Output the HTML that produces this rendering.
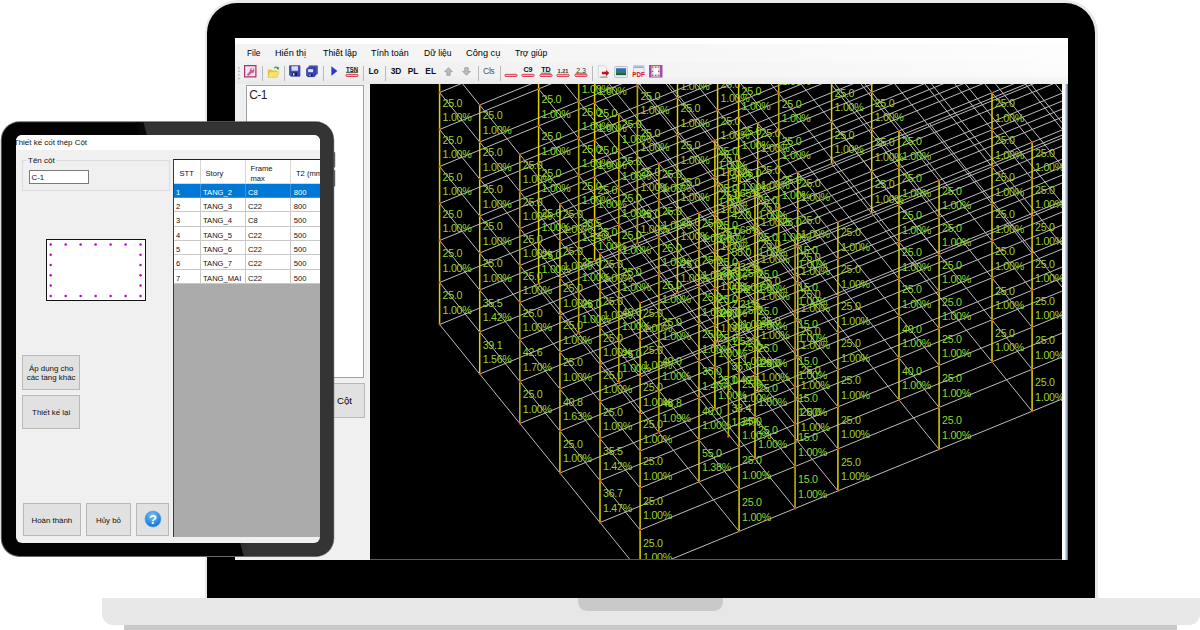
<!DOCTYPE html>
<html lang="vi">
<head>
<meta charset="utf-8">
<title>Thiết kế cốt thép Cột</title>
<style>
*{box-sizing:border-box;margin:0;padding:0}
html,body{width:1200px;height:630px;overflow:hidden;background:#fff}
body{position:relative;font-family:"Liberation Sans",Arial,sans-serif;color:#000}
.abs{position:absolute}

/* ---------- laptop ---------- */
#lid{position:absolute;left:204.5px;top:0;width:893px;height:600px;background:#e9e9e9;border-radius:33px 33px 0 0}
#bezel{position:absolute;left:207px;top:3px;width:887.5px;height:597px;background:#000;border-radius:30px 30px 0 0}
#shadow{position:absolute;left:124px;top:615px;width:1053px;height:30px;background:#c9c9c9;border-radius:0 0 12px 12px}
#base{position:absolute;left:102px;top:598px;width:1098px;height:27px;background:#e7e7e7;border-radius:0 0 11px 11px}
#notch{position:absolute;left:578px;top:598px;width:145px;height:13px;background:#c9c9c9;border-radius:0 0 9px 9px}

#screen{position:absolute;left:234.5px;top:38px;width:833px;height:521.5px;background:#f0f0f0;overflow:hidden}
#topstrip{position:absolute;left:0;top:0;width:100%;height:6px;background:#fff}
#menubar{position:absolute;left:0;top:6px;width:100%;height:18px;background:linear-gradient(90deg,#f3f3f3 0,#f6f6f6 45%,#fdfdfd 100%);font-size:9.6px;color:#000}
#menubar span{position:absolute;top:3.2px;white-space:nowrap;transform-origin:0 50%}
#toolbar{position:absolute;left:0;top:24px;width:100%;height:22px;background:linear-gradient(180deg,rgba(255,255,255,0) 0,rgba(255,255,255,0) 60%,rgba(225,225,225,.55) 100%),linear-gradient(90deg,#f0f0f0 0,#f3f3f3 45%,#fcfcfc 100%)}
#toolbar .sep{position:absolute;top:4px;width:1px;height:15px;background:#b9b9b9}
#toolbar .t{position:absolute;top:4.2px;font-size:8.4px;font-weight:bold;white-space:nowrap;color:#111}
#toolbar svg{position:absolute;overflow:visible}
#listbox{position:absolute;left:11.3px;top:46.5px;width:118.5px;height:293px;background:#fff;border:1px solid #9aa0a8}
#listbox span{position:absolute;left:2.4px;top:2.4px;font-size:12px;color:#222;letter-spacing:-0.5px}
#colbtn{position:absolute;left:60px;top:344.7px;width:70px;height:35px;background:#e1e1e1;border:1px solid #b8b8b8;font-size:9.6px;text-align:right;padding:11.3px 11.5px 0 0;white-space:nowrap}
#viewport{position:absolute;left:135px;top:46px;width:692.5px;height:476px;background:#000;overflow:hidden}
#vline{position:absolute;left:135px;top:520.7px;width:692.5px;height:0.8px;background:#5a5a5a}
#rstrip{position:absolute;left:827.5px;top:46px;width:5.5px;height:476px;background:linear-gradient(90deg,#fff 0,#fdfdfd 40%,#a9b9d2 72%,#596273 100%)}
svg.wire{position:absolute;left:0;top:0;display:block}

/* ---------- tablet ---------- */
#tablet{position:absolute;left:0;top:120px;width:337px;height:438px}
#tscreen{position:absolute;left:16px;top:135px;width:304px;height:407.5px;background:#f0f0f0;border-radius:6px;overflow:hidden;font-size:7.6px;color:#111}
#ttitle{position:absolute;left:0;top:0;width:100%;height:15px;background:#fff;font-size:7.95px;white-space:nowrap}
#ttitle span{position:absolute;left:-2.2px;top:2.5px}
#grp{position:absolute;left:6px;top:24.5px;width:147.5px;height:31px;border:1px solid #dcdcdc}
#grplbl{position:absolute;left:11px;top:20.5px;background:#f0f0f0;padding:0 1px;font-size:8px}
#tbox{position:absolute;left:12.5px;top:34.5px;width:60px;height:14px;background:#fff;border:1px solid #7a7a7a;font-size:7.8px;padding:2.2px 0 0 2px}
#sect{position:absolute;left:30px;top:103.5px;width:100px;height:62px;background:#fff;border:1px solid #111}
.btn{position:absolute;background:#e1e1e1;border:1px solid #b8b8b8;text-align:center;white-space:nowrap;font-size:7.9px;line-height:9.4px}
#grid{position:absolute;left:156.5px;top:24px;width:161px;height:377.5px;background:#ababab;border-left:1.5px solid #3a3a3a;border-top:1.5px solid #222}
#grid .hd{position:absolute;left:0;top:0;height:23.8px;background:#fff;border-right:1px solid #d6d6d6;border-bottom:1px solid #d6d6d6}
#grid .c{position:absolute;height:14.35px;background:#fff;border-right:1px solid #c8c8c8;border-bottom:1px solid #c8c8c8;padding:4.2px 0 0 2.5px;white-space:nowrap;overflow:hidden}
#grid .sel{background:#0078d7;color:#fff;border-color:#3a93de}
#grid .hd span{position:absolute;white-space:nowrap;line-height:9.6px}
</style>
</head>
<body>

<!-- laptop body -->
<div id="lid"></div>
<div id="bezel"></div>
<div id="shadow"></div>
<div id="base"></div>
<div id="notch"></div>

<div id="screen">
  <div id="topstrip"></div>
  <div id="menubar">
    <span style="left:12.8px;transform:scaleX(0.87)">File</span>
    <span style="left:40.8px;transform:scaleX(0.95)">Hiển thị</span>
    <span style="left:88px;transform:scaleX(0.92)">Thiết lập</span>
    <span style="left:136.8px;transform:scaleX(0.93)">Tính toán</span>
    <span style="left:189.3px;transform:scaleX(0.89)">Dữ liệu</span>
    <span style="left:231.8px;transform:scaleX(0.96)">Công cụ</span>
    <span style="left:280.7px;transform:scaleX(0.9)">Trợ giúp</span>
  </div>
  <div id="toolbar">
    <svg width="4" height="16" style="left:2px;top:3px" viewBox="0 0 4 16"><path d="M1 2h1.6v1.4H1zM1 5.6h1.6V7H1zM1 9.200000000000001h1.6v1.4H1zM1 12.8h1.6v1.4H1z" fill="#b4b4b4"/></svg>
    <!-- key icon -->
    <svg width="12.5" height="12.5" style="left:9.5px;top:3px" viewBox="0 0 16 16"><rect x="0.8" y="0.8" width="14.4" height="14.4" fill="#f6e3ee" stroke="#a3396f" stroke-width="1.6"/><path d="M3.5 12.5l4-4.6a3 3 0 1 1 2.4 2.2l-4.2 4z" fill="#c9609a"/><circle cx="10.6" cy="5.4" r="1.1" fill="#f6e3ee"/></svg>
    <div class="sep" style="left:27px"></div>
    <!-- open folder -->
    <svg width="13" height="13" style="left:32px;top:3px" viewBox="0 0 16 16"><path d="M1 5.5h5l1 1.3h5.5V15H1z" fill="#e4c43c"/><path d="M3.2 8.2h11.6L12.6 15H1z" fill="#f7e468" stroke="#d5b230" stroke-width="0.5"/><path d="M8.3 3.6c1.6-2.4 4.4-2.4 5.4-.6l1.2-.6-.5 3.4-3.1-1.300000000000001 1.200000000000001-.6c-.7-1-2-1-3 .4z" fill="#2f9a3c"/></svg>
    <div class="sep" style="left:49px"></div>
    <!-- save -->
    <svg width="11.5" height="12" style="left:54.5px;top:3px" viewBox="0 0 16 16"><path d="M0.8 0.8h14.4v14.4H2.6L0.8 13.4z" fill="#3b4cc0" stroke="#26318a" stroke-width="1"/><rect x="3.4" y="1.4" width="9.2" height="6.2" fill="#d9def6"/><rect x="4.6" y="10" width="6.8" height="5" fill="#1b1f52"/><rect x="5.6" y="11" width="2" height="3.4" fill="#d9def6"/></svg>
    <!-- save all -->
    <svg width="12" height="12.5" style="left:71px;top:2.5px" viewBox="0 0 16 16"><path d="M4.5 0.8h10.7v10.7H4.5z" fill="#5262cc" stroke="#2c3796" stroke-width="0.9"/><path d="M2.6 2.6h10.7v10.7H2.6z" fill="#4656c6" stroke="#2c3796" stroke-width="0.9"/><path d="M0.8 4.5h10.7v10.7H2.200000000000001L0.8 13.8z" fill="#3b4cc0" stroke="#26318a" stroke-width="0.9"/><rect x="2.8" y="5.2" width="6.6" height="4" fill="#d9def6"/><rect x="3.8" y="11.3" width="5" height="3.6" fill="#1b1f52"/><rect x="4.6" y="12" width="1.5" height="2.4" fill="#d9def6"/></svg>
    <div class="sep" style="left:88.5px"></div>
    <!-- play -->
    <svg width="7" height="10" style="left:96.3px;top:4px" viewBox="0 0 7 10"><path d="M0.4 0.2L6.4 5 0.4 9.8z" fill="#2b35d8"/></svg>
    <!-- TSN -->
    <svg width="14" height="13" style="left:110px;top:3px" viewBox="0 0 14 13"><text x="7" y="6.6" text-anchor="middle" font-family="Liberation Sans,Arial,sans-serif" font-weight="bold" font-size="6.6" fill="#111" textLength="12" lengthAdjust="spacingAndGlyphs">TSN</text><rect x="1" y="6.9" width="12" height="0.7" fill="#111"/><rect x="0.8" y="9.3" width="12.4" height="2.2" rx="1.1" fill="#b9cfe4" stroke="#e0202c" stroke-width="0.8"/></svg>
    <div class="sep" style="left:128.5px"></div>
    <div class="t" style="left:134px">Lo</div>
    <div class="sep" style="left:150.5px"></div>
    <div class="t" style="left:156.2px">3D</div>
    <div class="t" style="left:173.2px">PL</div>
    <div class="t" style="left:190.8px">EL</div>
    <!-- arrows -->
    <svg width="9" height="9" style="left:209.5px;top:4.8px" viewBox="0 0 9 9"><path d="M4.5 0.7L8.3 4.6H6.2V8.3H2.8V4.6H0.7z" fill="#bdbdbd" stroke="#8f8f8f" stroke-width="0.7"/></svg>
    <svg width="9" height="9" style="left:227.5px;top:4.8px" viewBox="0 0 9 9"><path d="M4.5 8.3L8.3 4.4H6.2V0.7H2.8V4.4H0.7z" fill="#bdbdbd" stroke="#8f8f8f" stroke-width="0.7"/></svg>
    <div class="sep" style="left:243px"></div>
    <div class="t" style="left:248.6px;font-weight:normal;color:#555;font-size:8.8px;letter-spacing:-0.55px">Cls</div>
    <div class="sep" style="left:265px"></div>
    <!-- underline icons -->
    <svg width="14" height="13" style="left:269.3px;top:3px" viewBox="0 0 14 13"><rect x="0.8" y="9.3" width="12.4" height="2.2" rx="1.1" fill="#b9cfe4" stroke="#e0202c" stroke-width="0.8"/></svg>
    <svg width="14" height="13" style="left:286.3px;top:3px" viewBox="0 0 14 13"><text x="7" y="7.4" text-anchor="middle" font-family="Liberation Sans,Arial,sans-serif" font-weight="bold" font-size="7.2" fill="#111">C9</text><rect x="0.8" y="9.3" width="12.4" height="2.2" rx="1.1" fill="#b9cfe4" stroke="#e0202c" stroke-width="0.8"/></svg>
    <svg width="14" height="13" style="left:304.2px;top:3px" viewBox="0 0 14 13"><text x="7" y="7.4" text-anchor="middle" font-family="Liberation Sans,Arial,sans-serif" font-weight="bold" font-size="7.2" fill="#111">TD</text><rect x="2.2" y="7.8" width="9.6" height="0.6" fill="#111"/><rect x="0.8" y="9.3" width="12.4" height="2.2" rx="1.1" fill="#b9cfe4" stroke="#e0202c" stroke-width="0.8"/></svg>
    <svg width="14" height="13" style="left:321.8px;top:3px" viewBox="0 0 14 13"><text x="7" y="7.6" text-anchor="middle" font-family="Liberation Sans,Arial,sans-serif" font-weight="bold" font-size="5.6" fill="#333">1.21</text><rect x="0.8" y="9.3" width="12.4" height="2.2" rx="1.1" fill="#b9cfe4" stroke="#e0202c" stroke-width="0.8"/></svg>
    <svg width="14" height="13" style="left:339.5px;top:3px" viewBox="0 0 14 13"><text x="7" y="7.5" text-anchor="middle" font-family="Liberation Sans,Arial,sans-serif" font-size="7" fill="#333">2.3</text><rect x="1.5" y="8" width="11" height="0.5" fill="#444"/><rect x="0.8" y="9.3" width="12.4" height="2.2" rx="1.1" fill="#b9cfe4" stroke="#e0202c" stroke-width="0.8"/></svg>
    <div class="sep" style="left:357.6px"></div>
    <!-- doc with red arrow -->
    <svg width="13" height="13" style="left:362.5px;top:3px" viewBox="0 0 16 16"><path d="M1.5 0.8h7.5l3 3V15.200000000000001H1.5z" fill="#f4f4f4" stroke="#c9c9c9" stroke-width="0.8"/><path d="M4 14.2h9v1.3H4z" fill="#8a8a8a"/><path d="M6 8.3h5V6l4.2 3.9L11 13.8v-2.300000000000001H6z" fill="#c4101c"/></svg>
    <!-- picture -->
    <svg width="14" height="12" style="left:379px;top:3.5px" viewBox="0 0 16 14"><rect x="0.6" y="0.6" width="14.8" height="12.8" rx="1" fill="#eef1f4" stroke="#a9b2bb" stroke-width="0.9"/><rect x="2.2" y="2.6" width="11.6" height="8" fill="#2f6fb4"/><path d="M2.2 10.6V7.2l3.5-2.2 4 3 4.100000000000001-1.2v3.8z" fill="#2e7f52"/><path d="M2.2 10.6V8.6l11.6 0v2z" fill="#1d5b3a"/></svg>
    <!-- pdf -->
    <svg width="13" height="13" style="left:397.2px;top:3px" viewBox="0 0 13 13"><rect x="1.5" y="0.8" width="10.5" height="8" fill="#e9eef6" stroke="#a8b7cc" stroke-width="0.7"/><rect x="2" y="1.6" width="9.4" height="1.1" fill="#5f8fd0"/><text x="6.5" y="12.4" text-anchor="middle" font-family="Liberation Sans,Arial,sans-serif" font-weight="bold" font-size="7.6" fill="#e01818" textLength="12.4" lengthAdjust="spacingAndGlyphs">PDF</text></svg>
    <!-- purple section icon -->
    <svg width="13.5" height="12.5" style="left:414.3px;top:2.6px" viewBox="0 0 14 13"><rect x="0" y="0" width="14" height="13" fill="#a24bb0"/><rect x="2.6" y="0.9" width="8.8" height="11.2" fill="#dcdcdc"/><path d="M3.200000000000001 1.6h1.200000000000001v1.200000000000001H3.200000000000001zM6.4 1.6h1.2v1.200000000000001H6.4zM9.6 1.6h1.2v1.200000000000001H9.6zM3.200000000000001 10.200000000000001h1.200000000000001v1.2H3.200000000000001zM6.4 10.200000000000001h1.2v1.2H6.4zM9.6 10.200000000000001h1.2v1.2H9.6zM3.200000000000001 6h1.200000000000001v1.2H3.200000000000001zM9.6 6h1.2v1.2H9.6z" fill="#e22"/><rect x="4.8" y="3.4" width="4.4" height="6.2" fill="#fff"/></svg>

  </div>
  <div id="listbox"><span>C-1</span></div>
  <div id="colbtn">Chọn Cột</div>
  <div id="viewport">
<svg class="wire" width="692.5" height="475.0" viewBox="0 0 692.5 475.0">
<path d="M296.9 477.0L694.5 314.0M230.0 438.5L694.5 248.1M189.9 389.0L694.5 182.1M149.8 339.5L694.5 116.2M109.7 290.0L694.5 50.2M69.6 240.5L661.1 -2.0M261.2 477.0L69.6 240.5M369.1 447.4L168.6 199.9M425.1 424.4L224.6 176.9M467.9 406.9L267.4 159.4M569.1 365.4L368.6 117.9M662.1 327.3L461.6 79.8M694.5 206.1L559.6 39.6M694.5 41.7L659.6 -1.4M270.1 446.0L694.5 272.0M230.0 396.5L694.5 206.1M189.9 347.0L694.5 140.1M149.8 297.5L694.5 74.2M109.7 248.0L694.5 8.2M69.6 198.5L558.6 -2.0M270.1 446.0L69.6 198.5M369.1 405.4L168.6 157.9M425.1 382.4L224.6 134.9M467.9 364.9L267.4 117.4M569.1 323.4L368.6 75.9M662.1 285.3L461.6 37.8M694.5 164.1L559.9 -2.0M694.5 -0.3L693.1 -2.0M270.1 404.0L694.5 230.0M230.0 354.5L694.5 164.1M189.9 305.0L694.5 98.1M149.8 255.5L694.5 32.2M109.7 206.0L617.0 -2.0M69.6 156.5L456.2 -2.0M270.1 404.0L69.6 156.5M369.1 363.4L168.6 115.9M425.1 340.4L224.6 92.9M467.9 322.9L267.4 75.4M569.1 281.4L368.6 33.9M662.1 243.3L463.4 -2.0M694.5 122.1L593.9 -2.0M270.1 367.0L694.5 193.0M230.0 317.5L694.5 127.1M189.9 268.0L694.5 61.1M149.8 218.5L687.6 -2.0M109.7 169.0L526.8 -2.0M69.6 119.5L365.9 -2.0M270.1 367.0L69.6 119.5M369.1 326.4L168.6 78.9M425.1 303.4L224.6 55.9M467.9 285.9L267.4 38.4M569.1 244.4L369.5 -2.0M662.1 206.3L493.4 -2.0M694.5 85.1L623.9 -2.0M270.1 330.0L694.5 156.0M230.0 280.5L694.5 90.1M189.9 231.0L694.5 24.1M149.8 181.5L597.4 -2.0M109.7 132.0L436.5 -2.0M69.6 82.5L275.7 -2.0M270.1 330.0L69.6 82.5M369.1 289.4L168.6 41.9M425.1 266.4L224.6 18.9M467.9 248.9L267.4 1.4M569.1 207.4L399.5 -2.0M662.1 169.3L523.3 -2.0M694.5 48.1L653.9 -2.0M270.1 293.0L694.5 119.0M230.0 243.5L694.5 53.1M189.9 194.0L667.9 -2.0M149.8 144.5L507.1 -2.0M109.7 95.0L346.3 -2.0M69.6 45.5L185.5 -2.0M270.1 293.0L69.6 45.5M369.1 252.4L168.6 4.9M425.1 229.4L237.6 -2.0M467.9 211.9L294.6 -2.0M569.1 170.4L429.4 -2.0M662.1 132.3L553.3 -2.0M694.5 11.1L683.9 -2.0M270.1 256.0L694.5 82.0M230.0 206.5L694.5 16.1M189.9 157.0L577.7 -2.0M149.8 107.5L416.9 -2.0M109.7 58.0L256.0 -2.0M69.6 8.5L95.2 -2.0M270.1 256.0L69.6 8.5M369.1 215.4L193.0 -2.0M425.1 192.4L267.6 -2.0M467.9 174.9L324.6 -2.0M569.1 133.4L459.4 -2.0M662.1 95.3L583.3 -2.0M270.1 219.0L694.5 45.0M230.0 169.5L648.3 -2.0M189.9 120.0L487.5 -2.0M149.8 70.5L326.6 -2.0M109.7 21.0L165.8 -2.0M270.1 219.0L91.1 -2.0M369.1 178.4L222.9 -2.0M425.1 155.4L297.5 -2.0M467.9 137.9L354.6 -2.0M569.1 96.4L489.4 -2.0M662.1 58.3L613.3 -2.0" stroke="#bcbcbc" stroke-width="1" fill="none"/>
<path d="" stroke="#a8a8a8" stroke-width="0.9" fill="none"/>
<path d="M425.1 424.4L425.1 155.4M288.9 348.4L288.9 79.4M149.8 339.5L149.8 70.5M248.8 298.9L248.8 29.9M208.7 249.4L208.7 -2.0M408.7 167.4L408.7 -2.0M267.4 159.4L267.4 -2.0M358.4 352.9L358.4 83.9" stroke="#b8ae00" stroke-width="1.6" fill="none"/>
<path d="M270.1 477.0L270.1 219.0M369.1 447.4L369.1 178.4M467.9 406.9L467.9 137.9M569.1 365.4L569.1 96.4M662.1 327.3L662.1 58.3M230.0 438.5L230.0 169.5M329.0 397.9L329.0 128.9M385.0 374.9L385.0 105.9M427.8 357.4L427.8 88.4M529.0 315.9L529.0 46.9M622.0 277.8L622.0 8.8M189.9 389.0L189.9 120.0M344.9 325.4L344.9 56.4M387.7 307.9L387.7 38.9M347.6 258.4L347.6 -2.0M109.7 290.0L109.7 21.0M307.5 208.9L307.5 -2.0M501.7 129.3L501.7 -2.0M69.6 240.5L69.6 -2.0M168.6 199.9L168.6 -2.0M224.6 176.9L224.6 -2.0M368.6 117.9L368.6 -2.0M461.6 79.8L461.6 -2.0" stroke="#e0d400" stroke-width="1.5" fill="none"/>
<path d="M269.2 445.1h1.8v1.8h-1.8zM269.2 403.1h1.8v1.8h-1.8zM269.2 366.1h1.8v1.8h-1.8zM269.2 329.1h1.8v1.8h-1.8zM269.2 292.1h1.8v1.8h-1.8zM269.2 255.1h1.8v1.8h-1.8zM269.2 218.1h1.8v1.8h-1.8zM368.2 446.5h1.8v1.8h-1.8zM368.2 404.5h1.8v1.8h-1.8zM368.2 362.5h1.8v1.8h-1.8zM368.2 325.5h1.8v1.8h-1.8zM368.2 288.5h1.8v1.8h-1.8zM368.2 251.5h1.8v1.8h-1.8zM368.2 214.5h1.8v1.8h-1.8zM368.2 177.5h1.8v1.8h-1.8zM424.2 423.6h1.8v1.8h-1.8zM424.2 381.6h1.8v1.8h-1.8zM424.2 339.6h1.8v1.8h-1.8zM424.2 302.6h1.8v1.8h-1.8zM424.2 265.6h1.8v1.8h-1.8zM424.2 228.5h1.8v1.8h-1.8zM424.2 191.5h1.8v1.8h-1.8zM424.2 154.5h1.8v1.8h-1.8zM467.0 406.0h1.8v1.8h-1.8zM467.0 364.0h1.8v1.8h-1.8zM467.0 322.0h1.8v1.8h-1.8zM467.0 285.0h1.8v1.8h-1.8zM467.0 248.0h1.8v1.8h-1.8zM467.0 211.0h1.8v1.8h-1.8zM467.0 174.0h1.8v1.8h-1.8zM467.0 137.0h1.8v1.8h-1.8zM568.2 364.5h1.8v1.8h-1.8zM568.2 322.5h1.8v1.8h-1.8zM568.2 280.5h1.8v1.8h-1.8zM568.2 243.5h1.8v1.8h-1.8zM568.2 206.5h1.8v1.8h-1.8zM568.2 169.5h1.8v1.8h-1.8zM568.2 132.5h1.8v1.8h-1.8zM568.2 95.5h1.8v1.8h-1.8zM661.2 326.4h1.8v1.8h-1.8zM661.2 284.4h1.8v1.8h-1.8zM661.2 242.4h1.8v1.8h-1.8zM661.2 205.4h1.8v1.8h-1.8zM661.2 168.4h1.8v1.8h-1.8zM661.2 131.4h1.8v1.8h-1.8zM661.2 94.4h1.8v1.8h-1.8zM661.2 57.4h1.8v1.8h-1.8zM229.1 437.6h1.8v1.8h-1.8zM229.1 395.6h1.8v1.8h-1.8zM229.1 353.6h1.8v1.8h-1.8zM229.1 316.6h1.8v1.8h-1.8zM229.1 279.6h1.8v1.8h-1.8zM229.1 242.6h1.8v1.8h-1.8zM229.1 205.6h1.8v1.8h-1.8zM229.1 168.6h1.8v1.8h-1.8zM328.1 397.0h1.8v1.8h-1.8zM328.1 355.0h1.8v1.8h-1.8zM328.1 313.0h1.8v1.8h-1.8zM328.1 276.0h1.8v1.8h-1.8zM328.1 239.0h1.8v1.8h-1.8zM328.1 202.0h1.8v1.8h-1.8zM328.1 165.0h1.8v1.8h-1.8zM328.1 128.0h1.8v1.8h-1.8zM384.1 374.1h1.8v1.8h-1.8zM384.1 332.1h1.8v1.8h-1.8zM384.1 290.1h1.8v1.8h-1.8zM384.1 253.0h1.8v1.8h-1.8zM384.1 216.0h1.8v1.8h-1.8zM384.1 179.0h1.8v1.8h-1.8zM384.1 142.0h1.8v1.8h-1.8zM384.1 105.0h1.8v1.8h-1.8zM426.9 356.5h1.8v1.8h-1.8zM426.9 314.5h1.8v1.8h-1.8zM426.9 272.5h1.8v1.8h-1.8zM426.9 235.5h1.8v1.8h-1.8zM426.9 198.5h1.8v1.8h-1.8zM426.9 161.5h1.8v1.8h-1.8zM426.9 124.5h1.8v1.8h-1.8zM426.9 87.5h1.8v1.8h-1.8zM528.1 315.0h1.8v1.8h-1.8zM528.1 273.0h1.8v1.8h-1.8zM528.1 231.0h1.8v1.8h-1.8zM528.1 194.0h1.8v1.8h-1.8zM528.1 157.0h1.8v1.8h-1.8zM528.1 120.0h1.8v1.8h-1.8zM528.1 83.0h1.8v1.8h-1.8zM528.1 46.0h1.8v1.8h-1.8zM621.1 276.9h1.8v1.8h-1.8zM621.1 234.9h1.8v1.8h-1.8zM621.1 192.9h1.8v1.8h-1.8zM621.1 155.9h1.8v1.8h-1.8zM621.1 118.9h1.8v1.8h-1.8zM621.1 81.9h1.8v1.8h-1.8zM621.1 44.9h1.8v1.8h-1.8zM621.1 7.9h1.8v1.8h-1.8zM189.0 388.1h1.8v1.8h-1.8zM189.0 346.1h1.8v1.8h-1.8zM189.0 304.1h1.8v1.8h-1.8zM189.0 267.1h1.8v1.8h-1.8zM189.0 230.1h1.8v1.8h-1.8zM189.0 193.1h1.8v1.8h-1.8zM189.0 156.1h1.8v1.8h-1.8zM189.0 119.1h1.8v1.8h-1.8zM288.0 347.5h1.8v1.8h-1.8zM288.0 305.5h1.8v1.8h-1.8zM288.0 263.5h1.8v1.8h-1.8zM288.0 226.5h1.8v1.8h-1.8zM288.0 189.5h1.8v1.8h-1.8zM288.0 152.5h1.8v1.8h-1.8zM288.0 115.5h1.8v1.8h-1.8zM288.0 78.5h1.8v1.8h-1.8zM344.0 324.6h1.8v1.8h-1.8zM344.0 282.6h1.8v1.8h-1.8zM344.0 240.5h1.8v1.8h-1.8zM344.0 203.5h1.8v1.8h-1.8zM344.0 166.5h1.8v1.8h-1.8zM344.0 129.5h1.8v1.8h-1.8zM344.0 92.5h1.8v1.8h-1.8zM344.0 55.5h1.8v1.8h-1.8zM386.8 307.0h1.8v1.8h-1.8zM386.8 265.0h1.8v1.8h-1.8zM386.8 223.0h1.8v1.8h-1.8zM386.8 186.0h1.8v1.8h-1.8zM386.8 149.0h1.8v1.8h-1.8zM386.8 112.0h1.8v1.8h-1.8zM386.8 75.0h1.8v1.8h-1.8zM386.8 38.0h1.8v1.8h-1.8zM148.9 338.6h1.8v1.8h-1.8zM148.9 296.6h1.8v1.8h-1.8zM148.9 254.6h1.8v1.8h-1.8zM148.9 217.6h1.8v1.8h-1.8zM148.9 180.6h1.8v1.8h-1.8zM148.9 143.6h1.8v1.8h-1.8zM148.9 106.6h1.8v1.8h-1.8zM148.9 69.6h1.8v1.8h-1.8zM247.9 298.0h1.8v1.8h-1.8zM247.9 256.0h1.8v1.8h-1.8zM247.9 214.0h1.8v1.8h-1.8zM247.9 177.0h1.8v1.8h-1.8zM247.9 140.0h1.8v1.8h-1.8zM247.9 103.0h1.8v1.8h-1.8zM247.9 66.0h1.8v1.8h-1.8zM247.9 29.0h1.8v1.8h-1.8zM346.7 257.5h1.8v1.8h-1.8zM346.7 215.5h1.8v1.8h-1.8zM346.7 173.5h1.8v1.8h-1.8zM346.7 136.5h1.8v1.8h-1.8zM346.7 99.5h1.8v1.8h-1.8zM346.7 62.5h1.8v1.8h-1.8zM346.7 25.5h1.8v1.8h-1.8zM108.8 289.1h1.8v1.8h-1.8zM108.8 247.1h1.8v1.8h-1.8zM108.8 205.1h1.8v1.8h-1.8zM108.8 168.1h1.8v1.8h-1.8zM108.8 131.1h1.8v1.8h-1.8zM108.8 94.1h1.8v1.8h-1.8zM108.8 57.1h1.8v1.8h-1.8zM108.8 20.1h1.8v1.8h-1.8zM207.8 248.5h1.8v1.8h-1.8zM207.8 206.5h1.8v1.8h-1.8zM207.8 164.5h1.8v1.8h-1.8zM207.8 127.5h1.8v1.8h-1.8zM207.8 90.5h1.8v1.8h-1.8zM207.8 53.5h1.8v1.8h-1.8zM207.8 16.5h1.8v1.8h-1.8zM306.6 208.0h1.8v1.8h-1.8zM306.6 166.0h1.8v1.8h-1.8zM306.6 124.0h1.8v1.8h-1.8zM306.6 87.0h1.8v1.8h-1.8zM306.6 50.0h1.8v1.8h-1.8zM306.6 13.0h1.8v1.8h-1.8zM407.8 166.5h1.8v1.8h-1.8zM407.8 124.5h1.8v1.8h-1.8zM407.8 82.5h1.8v1.8h-1.8zM407.8 45.5h1.8v1.8h-1.8zM407.8 8.5h1.8v1.8h-1.8zM500.8 128.4h1.8v1.8h-1.8zM500.8 86.4h1.8v1.8h-1.8zM500.8 44.4h1.8v1.8h-1.8zM500.8 7.4h1.8v1.8h-1.8zM68.7 239.6h1.8v1.8h-1.8zM68.7 197.6h1.8v1.8h-1.8zM68.7 155.6h1.8v1.8h-1.8zM68.7 118.6h1.8v1.8h-1.8zM68.7 81.6h1.8v1.8h-1.8zM68.7 44.6h1.8v1.8h-1.8zM68.7 7.6h1.8v1.8h-1.8zM167.7 199.0h1.8v1.8h-1.8zM167.7 157.0h1.8v1.8h-1.8zM167.7 115.0h1.8v1.8h-1.8zM167.7 78.0h1.8v1.8h-1.8zM167.7 41.0h1.8v1.8h-1.8zM167.7 4.0h1.8v1.8h-1.8zM223.7 176.0h1.8v1.8h-1.8zM223.7 134.0h1.8v1.8h-1.8zM223.7 92.0h1.8v1.8h-1.8zM223.7 55.0h1.8v1.8h-1.8zM223.7 18.0h1.8v1.8h-1.8zM266.5 158.5h1.8v1.8h-1.8zM266.5 116.5h1.8v1.8h-1.8zM266.5 74.5h1.8v1.8h-1.8zM266.5 37.5h1.8v1.8h-1.8zM266.5 0.5h1.8v1.8h-1.8zM367.7 117.0h1.8v1.8h-1.8zM367.7 75.0h1.8v1.8h-1.8zM367.7 33.0h1.8v1.8h-1.8zM460.7 78.9h1.8v1.8h-1.8zM460.7 36.9h1.8v1.8h-1.8zM357.5 352.0h1.8v1.8h-1.8zM357.5 310.0h1.8v1.8h-1.8zM357.5 268.0h1.8v1.8h-1.8zM357.5 231.0h1.8v1.8h-1.8zM357.5 194.0h1.8v1.8h-1.8zM357.5 157.0h1.8v1.8h-1.8zM357.5 120.0h1.8v1.8h-1.8zM357.5 83.0h1.8v1.8h-1.8z" fill="#f03a14"/>
<g font-family="Liberation Sans, Arial, sans-serif" font-size="10.7" letter-spacing="-0.28" fill="#96d62d">
<text x="273.1" y="462.9">25.0<tspan x="273.1" dy="14.3">1.00%</tspan></text>
<text x="273.1" y="420.9">25.0<tspan x="273.1" dy="14.3">1.00%</tspan></text>
<text x="273.1" y="381.4">25.0<tspan x="273.1" dy="14.3">1.00%</tspan></text>
<text x="273.1" y="344.4">25.0<tspan x="273.1" dy="14.3">1.00%</tspan></text>
<text x="273.1" y="307.4">25.0<tspan x="273.1" dy="14.3">1.00%</tspan></text>
<text x="273.1" y="270.4">25.0<tspan x="273.1" dy="14.3">1.00%</tspan></text>
<text x="273.1" y="233.4">25.0<tspan x="273.1" dy="14.3">1.00%</tspan></text>
<text x="372.1" y="422.3">25.0<tspan x="372.1" dy="14.3">1.00%</tspan></text>
<text x="372.1" y="380.3">25.0<tspan x="372.1" dy="14.3">1.00%</tspan></text>
<text x="372.1" y="340.8">25.0<tspan x="372.1" dy="14.3">1.00%</tspan></text>
<text x="372.1" y="303.8">25.0<tspan x="372.1" dy="14.3">1.00%</tspan></text>
<text x="372.1" y="266.8">25.0<tspan x="372.1" dy="14.3">1.00%</tspan></text>
<text x="372.1" y="229.8">25.0<tspan x="372.1" dy="14.3">1.00%</tspan></text>
<text x="372.1" y="192.8">25.0<tspan x="372.1" dy="14.3">1.00%</tspan></text>
<text x="428.1" y="399.3">15.0<tspan x="428.1" dy="14.3">1.00%</tspan></text>
<text x="428.1" y="357.3">15.0<tspan x="428.1" dy="14.3">1.00%</tspan></text>
<text x="428.1" y="317.8">15.0<tspan x="428.1" dy="14.3">1.00%</tspan></text>
<text x="428.1" y="280.8">15.0<tspan x="428.1" dy="14.3">1.00%</tspan></text>
<text x="428.1" y="243.8">15.0<tspan x="428.1" dy="14.3">1.00%</tspan></text>
<text x="428.1" y="206.8">15.0<tspan x="428.1" dy="14.3">1.00%</tspan></text>
<text x="428.1" y="169.8">15.0<tspan x="428.1" dy="14.3">1.00%</tspan></text>
<text x="470.9" y="381.8">25.0<tspan x="470.9" dy="14.3">1.00%</tspan></text>
<text x="470.9" y="339.8">25.0<tspan x="470.9" dy="14.3">1.00%</tspan></text>
<text x="470.9" y="300.3">25.0<tspan x="470.9" dy="14.3">1.00%</tspan></text>
<text x="470.9" y="263.3">25.0<tspan x="470.9" dy="14.3">1.00%</tspan></text>
<text x="470.9" y="226.3">25.0<tspan x="470.9" dy="14.3">1.00%</tspan></text>
<text x="470.9" y="189.3">25.0<tspan x="470.9" dy="14.3">1.00%</tspan></text>
<text x="470.9" y="152.3">25.0<tspan x="470.9" dy="14.3">1.00%</tspan></text>
<text x="572.1" y="340.3">25.0<tspan x="572.1" dy="14.3">1.00%</tspan></text>
<text x="572.1" y="298.3">25.0<tspan x="572.1" dy="14.3">1.00%</tspan></text>
<text x="572.1" y="258.8">25.0<tspan x="572.1" dy="14.3">1.00%</tspan></text>
<text x="572.1" y="221.8">25.0<tspan x="572.1" dy="14.3">1.00%</tspan></text>
<text x="572.1" y="184.8">25.0<tspan x="572.1" dy="14.3">1.00%</tspan></text>
<text x="572.1" y="147.8">25.0<tspan x="572.1" dy="14.3">1.00%</tspan></text>
<text x="572.1" y="110.8">25.0<tspan x="572.1" dy="14.3">1.00%</tspan></text>
<text x="665.1" y="302.2">25.0<tspan x="665.1" dy="14.3">1.00%</tspan></text>
<text x="665.1" y="260.2">25.0<tspan x="665.1" dy="14.3">1.00%</tspan></text>
<text x="665.1" y="220.7">25.0<tspan x="665.1" dy="14.3">1.00%</tspan></text>
<text x="665.1" y="183.7">25.0<tspan x="665.1" dy="14.3">1.00%</tspan></text>
<text x="665.1" y="146.7">25.0<tspan x="665.1" dy="14.3">1.00%</tspan></text>
<text x="665.1" y="109.7">25.0<tspan x="665.1" dy="14.3">1.00%</tspan></text>
<text x="665.1" y="72.7">25.0<tspan x="665.1" dy="14.3">1.00%</tspan></text>
<text x="233.0" y="413.4">36.7<tspan x="233.0" dy="14.3">1.47%</tspan></text>
<text x="233.0" y="371.4">35.5<tspan x="233.0" dy="14.3">1.42%</tspan></text>
<text x="233.0" y="331.9">25.0<tspan x="233.0" dy="14.3">1.00%</tspan></text>
<text x="233.0" y="294.9">25.0<tspan x="233.0" dy="14.3">1.00%</tspan></text>
<text x="233.0" y="257.9">25.0<tspan x="233.0" dy="14.3">1.00%</tspan></text>
<text x="233.0" y="220.9">25.0<tspan x="233.0" dy="14.3">1.00%</tspan></text>
<text x="233.0" y="183.9">25.0<tspan x="233.0" dy="14.3">1.00%</tspan></text>
<text x="332.0" y="372.8">55.0<tspan x="332.0" dy="14.3">1.38%</tspan></text>
<text x="332.0" y="330.8">40.0<tspan x="332.0" dy="14.3">1.00%</tspan></text>
<text x="332.0" y="291.3">35.0<tspan x="332.0" dy="14.3">1.40%</tspan></text>
<text x="332.0" y="254.3">25.0<tspan x="332.0" dy="14.3">1.00%</tspan></text>
<text x="332.0" y="217.3">25.0<tspan x="332.0" dy="14.3">1.00%</tspan></text>
<text x="332.0" y="180.3">25.0<tspan x="332.0" dy="14.3">1.00%</tspan></text>
<text x="332.0" y="143.3">25.0<tspan x="332.0" dy="14.3">1.00%</tspan></text>
<text x="388.0" y="349.8">25.0<tspan x="388.0" dy="14.3">1.00%</tspan></text>
<text x="388.0" y="307.8">25.0<tspan x="388.0" dy="14.3">1.00%</tspan></text>
<text x="388.0" y="268.3">25.0<tspan x="388.0" dy="14.3">1.00%</tspan></text>
<text x="388.0" y="231.3">25.0<tspan x="388.0" dy="14.3">1.00%</tspan></text>
<text x="388.0" y="194.3">25.0<tspan x="388.0" dy="14.3">1.00%</tspan></text>
<text x="388.0" y="157.3">25.0<tspan x="388.0" dy="14.3">1.00%</tspan></text>
<text x="388.0" y="120.3">25.0<tspan x="388.0" dy="14.3">1.00%</tspan></text>
<text x="430.8" y="332.3">25.0<tspan x="430.8" dy="14.3">1.00%</tspan></text>
<text x="430.8" y="290.3">25.0<tspan x="430.8" dy="14.3">1.00%</tspan></text>
<text x="430.8" y="250.8">25.0<tspan x="430.8" dy="14.3">1.00%</tspan></text>
<text x="430.8" y="213.8">25.0<tspan x="430.8" dy="14.3">1.00%</tspan></text>
<text x="430.8" y="176.8">25.0<tspan x="430.8" dy="14.3">1.00%</tspan></text>
<text x="430.8" y="139.8">25.0<tspan x="430.8" dy="14.3">1.00%</tspan></text>
<text x="430.8" y="102.8">25.0<tspan x="430.8" dy="14.3">1.00%</tspan></text>
<text x="532.0" y="290.8">40.0<tspan x="532.0" dy="14.3">1.00%</tspan></text>
<text x="532.0" y="248.8">40.0<tspan x="532.0" dy="14.3">1.00%</tspan></text>
<text x="532.0" y="209.3">25.0<tspan x="532.0" dy="14.3">1.00%</tspan></text>
<text x="532.0" y="172.3">25.0<tspan x="532.0" dy="14.3">1.00%</tspan></text>
<text x="532.0" y="135.3">25.0<tspan x="532.0" dy="14.3">1.00%</tspan></text>
<text x="532.0" y="98.3">25.0<tspan x="532.0" dy="14.3">1.00%</tspan></text>
<text x="532.0" y="61.3">25.0<tspan x="532.0" dy="14.3">1.00%</tspan></text>
<text x="625.0" y="252.7">25.0<tspan x="625.0" dy="14.3">1.00%</tspan></text>
<text x="625.0" y="210.7">25.0<tspan x="625.0" dy="14.3">1.00%</tspan></text>
<text x="625.0" y="171.2">25.0<tspan x="625.0" dy="14.3">1.00%</tspan></text>
<text x="625.0" y="134.2">25.0<tspan x="625.0" dy="14.3">1.00%</tspan></text>
<text x="625.0" y="97.2">25.0<tspan x="625.0" dy="14.3">1.00%</tspan></text>
<text x="625.0" y="60.2">25.0<tspan x="625.0" dy="14.3">1.00%</tspan></text>
<text x="625.0" y="23.2">25.0<tspan x="625.0" dy="14.3">1.00%</tspan></text>
<text x="192.9" y="363.9">25.0<tspan x="192.9" dy="14.3">1.00%</tspan></text>
<text x="192.9" y="321.9">40.8<tspan x="192.9" dy="14.3">1.63%</tspan></text>
<text x="192.9" y="282.4">25.0<tspan x="192.9" dy="14.3">1.00%</tspan></text>
<text x="192.9" y="245.4">25.0<tspan x="192.9" dy="14.3">1.00%</tspan></text>
<text x="192.9" y="208.4">25.0<tspan x="192.9" dy="14.3">1.00%</tspan></text>
<text x="192.9" y="171.4">25.0<tspan x="192.9" dy="14.3">1.00%</tspan></text>
<text x="192.9" y="134.4">25.0<tspan x="192.9" dy="14.3">1.00%</tspan></text>
<text x="291.9" y="323.3">48.8<tspan x="291.9" dy="14.3">1.09%</tspan></text>
<text x="291.9" y="281.3">40.0<tspan x="291.9" dy="14.3">1.00%</tspan></text>
<text x="291.9" y="241.8">25.0<tspan x="291.9" dy="14.3">1.00%</tspan></text>
<text x="291.9" y="204.8">25.0<tspan x="291.9" dy="14.3">1.00%</tspan></text>
<text x="291.9" y="167.8">25.0<tspan x="291.9" dy="14.3">1.00%</tspan></text>
<text x="291.9" y="130.8">25.0<tspan x="291.9" dy="14.3">1.00%</tspan></text>
<text x="291.9" y="93.8">25.0<tspan x="291.9" dy="14.3">1.00%</tspan></text>
<text x="347.9" y="300.3">25.0<tspan x="347.9" dy="14.3">1.00%</tspan></text>
<text x="347.9" y="258.3">25.0<tspan x="347.9" dy="14.3">1.00%</tspan></text>
<text x="347.9" y="218.8">25.0<tspan x="347.9" dy="14.3">1.00%</tspan></text>
<text x="347.9" y="181.8">25.0<tspan x="347.9" dy="14.3">1.00%</tspan></text>
<text x="347.9" y="144.8">25.0<tspan x="347.9" dy="14.3">1.00%</tspan></text>
<text x="347.9" y="107.8">25.0<tspan x="347.9" dy="14.3">1.00%</tspan></text>
<text x="347.9" y="70.8">25.0<tspan x="347.9" dy="14.3">1.00%</tspan></text>
<text x="390.7" y="282.8">25.0<tspan x="390.7" dy="14.3">1.00%</tspan></text>
<text x="390.7" y="240.8">25.0<tspan x="390.7" dy="14.3">1.00%</tspan></text>
<text x="390.7" y="201.3">25.0<tspan x="390.7" dy="14.3">1.00%</tspan></text>
<text x="390.7" y="164.3">25.0<tspan x="390.7" dy="14.3">1.00%</tspan></text>
<text x="390.7" y="127.3">25.0<tspan x="390.7" dy="14.3">1.00%</tspan></text>
<text x="390.7" y="90.3">25.0<tspan x="390.7" dy="14.3">1.00%</tspan></text>
<text x="390.7" y="53.3">25.0<tspan x="390.7" dy="14.3">1.00%</tspan></text>
<text x="152.8" y="314.4">25.0<tspan x="152.8" dy="14.3">1.00%</tspan></text>
<text x="152.8" y="272.4">42.6<tspan x="152.8" dy="14.3">1.70%</tspan></text>
<text x="152.8" y="232.9">25.0<tspan x="152.8" dy="14.3">1.00%</tspan></text>
<text x="152.8" y="195.9">25.0<tspan x="152.8" dy="14.3">1.00%</tspan></text>
<text x="152.8" y="158.9">25.0<tspan x="152.8" dy="14.3">1.00%</tspan></text>
<text x="152.8" y="121.9">25.0<tspan x="152.8" dy="14.3">1.00%</tspan></text>
<text x="152.8" y="84.9">25.0<tspan x="152.8" dy="14.3">1.00%</tspan></text>
<text x="251.8" y="273.8">25.0<tspan x="251.8" dy="14.3">1.00%</tspan></text>
<text x="251.8" y="231.8">40.0<tspan x="251.8" dy="14.3">1.00%</tspan></text>
<text x="251.8" y="192.3">25.0<tspan x="251.8" dy="14.3">1.00%</tspan></text>
<text x="251.8" y="155.3">25.0<tspan x="251.8" dy="14.3">1.00%</tspan></text>
<text x="251.8" y="118.3">25.0<tspan x="251.8" dy="14.3">1.00%</tspan></text>
<text x="251.8" y="81.3">25.0<tspan x="251.8" dy="14.3">1.00%</tspan></text>
<text x="251.8" y="44.3">25.0<tspan x="251.8" dy="14.3">1.00%</tspan></text>
<text x="350.6" y="233.3">25.0<tspan x="350.6" dy="14.3">1.00%</tspan></text>
<text x="350.6" y="191.3">25.0<tspan x="350.6" dy="14.3">1.00%</tspan></text>
<text x="350.6" y="151.8">25.0<tspan x="350.6" dy="14.3">1.00%</tspan></text>
<text x="350.6" y="114.8">25.0<tspan x="350.6" dy="14.3">1.00%</tspan></text>
<text x="350.6" y="77.8">25.0<tspan x="350.6" dy="14.3">1.00%</tspan></text>
<text x="350.6" y="40.8">25.0<tspan x="350.6" dy="14.3">1.00%</tspan></text>
<text x="350.6" y="3.8">25.0<tspan x="350.6" dy="14.3">1.00%</tspan></text>
<text x="112.7" y="264.9">39.1<tspan x="112.7" dy="14.3">1.56%</tspan></text>
<text x="112.7" y="222.9">35.5<tspan x="112.7" dy="14.3">1.42%</tspan></text>
<text x="112.7" y="183.4">25.0<tspan x="112.7" dy="14.3">1.00%</tspan></text>
<text x="112.7" y="146.4">25.0<tspan x="112.7" dy="14.3">1.00%</tspan></text>
<text x="112.7" y="109.4">25.0<tspan x="112.7" dy="14.3">1.00%</tspan></text>
<text x="112.7" y="72.4">25.0<tspan x="112.7" dy="14.3">1.00%</tspan></text>
<text x="112.7" y="35.4">25.0<tspan x="112.7" dy="14.3">1.00%</tspan></text>
<text x="211.7" y="224.3">25.0<tspan x="211.7" dy="14.3">1.00%</tspan></text>
<text x="211.7" y="182.3">25.0<tspan x="211.7" dy="14.3">1.00%</tspan></text>
<text x="211.7" y="142.8">38.5<tspan x="211.7" dy="14.3">1.54%</tspan></text>
<text x="211.7" y="105.8">25.0<tspan x="211.7" dy="14.3">1.00%</tspan></text>
<text x="211.7" y="68.8">25.0<tspan x="211.7" dy="14.3">1.00%</tspan></text>
<text x="211.7" y="31.8">25.0<tspan x="211.7" dy="14.3">1.00%</tspan></text>
<text x="211.7" y="-5.2">25.0<tspan x="211.7" dy="14.3">1.00%</tspan></text>
<text x="310.5" y="183.8">25.0<tspan x="310.5" dy="14.3">1.00%</tspan></text>
<text x="310.5" y="141.8">25.0<tspan x="310.5" dy="14.3">1.00%</tspan></text>
<text x="310.5" y="102.3">25.0<tspan x="310.5" dy="14.3">1.00%</tspan></text>
<text x="310.5" y="65.3">25.0<tspan x="310.5" dy="14.3">1.00%</tspan></text>
<text x="310.5" y="28.3">25.0<tspan x="310.5" dy="14.3">1.00%</tspan></text>
<text x="310.5" y="-8.7">25.0<tspan x="310.5" dy="14.3">1.00%</tspan></text>
<text x="411.7" y="142.3">25.0<tspan x="411.7" dy="14.3">1.00%</tspan></text>
<text x="411.7" y="100.3">25.0<tspan x="411.7" dy="14.3">1.00%</tspan></text>
<text x="411.7" y="60.8">25.0<tspan x="411.7" dy="14.3">1.00%</tspan></text>
<text x="411.7" y="23.8">25.0<tspan x="411.7" dy="14.3">1.00%</tspan></text>
<text x="411.7" y="-13.2">25.0<tspan x="411.7" dy="14.3">1.00%</tspan></text>
<text x="504.7" y="104.2">25.0<tspan x="504.7" dy="14.3">1.00%</tspan></text>
<text x="504.7" y="62.2">25.0<tspan x="504.7" dy="14.3">1.00%</tspan></text>
<text x="504.7" y="22.7">25.0<tspan x="504.7" dy="14.3">1.00%</tspan></text>
<text x="504.7" y="-14.3">25.0<tspan x="504.7" dy="14.3">1.00%</tspan></text>
<text x="72.6" y="215.4">25.0<tspan x="72.6" dy="14.3">1.00%</tspan></text>
<text x="72.6" y="173.4">25.0<tspan x="72.6" dy="14.3">1.00%</tspan></text>
<text x="72.6" y="133.9">25.0<tspan x="72.6" dy="14.3">1.00%</tspan></text>
<text x="72.6" y="96.9">25.0<tspan x="72.6" dy="14.3">1.00%</tspan></text>
<text x="72.6" y="59.9">25.0<tspan x="72.6" dy="14.3">1.00%</tspan></text>
<text x="72.6" y="22.9">25.0<tspan x="72.6" dy="14.3">1.00%</tspan></text>
<text x="72.6" y="-14.1">25.0<tspan x="72.6" dy="14.3">1.00%</tspan></text>
<text x="171.6" y="174.8">25.0<tspan x="171.6" dy="14.3">1.00%</tspan></text>
<text x="171.6" y="132.8">25.0<tspan x="171.6" dy="14.3">1.00%</tspan></text>
<text x="171.6" y="93.3">25.0<tspan x="171.6" dy="14.3">1.00%</tspan></text>
<text x="171.6" y="56.3">25.0<tspan x="171.6" dy="14.3">1.00%</tspan></text>
<text x="171.6" y="19.3">25.0<tspan x="171.6" dy="14.3">1.00%</tspan></text>
<text x="171.6" y="-17.7">25.0<tspan x="171.6" dy="14.3">1.00%</tspan></text>
<text x="227.6" y="151.8">25.0<tspan x="227.6" dy="14.3">1.00%</tspan></text>
<text x="227.6" y="109.8">25.0<tspan x="227.6" dy="14.3">1.00%</tspan></text>
<text x="227.6" y="70.3">25.0<tspan x="227.6" dy="14.3">1.00%</tspan></text>
<text x="227.6" y="33.3">25.0<tspan x="227.6" dy="14.3">1.00%</tspan></text>
<text x="227.6" y="-3.7">25.0<tspan x="227.6" dy="14.3">1.00%</tspan></text>
<text x="270.4" y="134.3">25.0<tspan x="270.4" dy="14.3">1.00%</tspan></text>
<text x="270.4" y="92.3">25.0<tspan x="270.4" dy="14.3">1.00%</tspan></text>
<text x="270.4" y="52.8">25.0<tspan x="270.4" dy="14.3">1.00%</tspan></text>
<text x="270.4" y="15.8">25.0<tspan x="270.4" dy="14.3">1.00%</tspan></text>
<text x="371.6" y="92.8">25.0<tspan x="371.6" dy="14.3">1.00%</tspan></text>
<text x="371.6" y="50.8">25.0<tspan x="371.6" dy="14.3">1.00%</tspan></text>
<text x="371.6" y="11.3">25.0<tspan x="371.6" dy="14.3">1.00%</tspan></text>
<text x="464.6" y="54.7">25.0<tspan x="464.6" dy="14.3">1.00%</tspan></text>
<text x="464.6" y="12.7">25.0<tspan x="464.6" dy="14.3">1.00%</tspan></text>
<text x="361.4" y="327.8">33.4<tspan x="361.4" dy="14.3">1.34%</tspan></text>
<text x="361.4" y="285.8">35.0<tspan x="361.4" dy="14.3">1.40%</tspan></text>
<text x="361.4" y="246.3">38.0<tspan x="361.4" dy="14.3">1.52%</tspan></text>
<text x="361.4" y="209.3">55.2<tspan x="361.4" dy="14.3">2.21%</tspan></text>
<text x="361.4" y="172.3">58.0<tspan x="361.4" dy="14.3">2.32%</tspan></text>
<text x="361.4" y="135.3">42.0<tspan x="361.4" dy="14.3">1.68%</tspan></text>
<text x="361.4" y="98.3">91.2<tspan x="361.4" dy="14.3">3.65%</tspan></text>
</g>
</svg>
  </div>
  <div id="vline"></div>
  <div id="rstrip"></div>
</div>

<!-- tablet -->
<svg id="tablet" viewBox="0 120 337 438">
  <defs>
    <clipPath id="tb"><rect x="1.8" y="122.3" width="331.4" height="433.6" rx="17.5"/></clipPath>
    <linearGradient id="gl" x1="0" y1="0" x2="1" y2="0">
      <stop offset="0" stop-color="#060606"/><stop offset="1" stop-color="#343434"/>
    </linearGradient>
  </defs>
  <rect x="333" y="152" width="2.2" height="15.5" rx="0.8" fill="#5a5a5a"/>
  <rect x="333" y="170" width="2.2" height="16.5" rx="0.8" fill="#5a5a5a"/>
  <rect x="0.8" y="121.3" width="333.4" height="435.6" rx="18.5" fill="#6a6a6a"/>
  <rect x="1.8" y="122.3" width="331.4" height="433.6" rx="17.5" fill="#030303"/>
  <g clip-path="url(#tb)">
    <polygon points="139,120 340,120 340,560 248.5,560" fill="#343434"/>
    <polygon points="135,120 143,120 252.5,560 244.5,560" fill="url(#gl)"/>
  </g>
</svg>

<div id="tscreen">
  <div id="ttitle"><span>Thiết kế cốt thép Cột</span></div>
  <div id="grp"></div>
  <div id="grplbl">Tên cột</div>
  <div id="tbox">C-1</div>
  <div id="sect">
    <svg width="97.5" height="60" viewBox="0 0 97.5 60" style="position:absolute;left:0;top:0"><circle cx="3.7" cy="4.5" r="1.25" fill="#c400c4"/><circle cx="3.7" cy="55.9" r="1.25" fill="#c400c4"/><circle cx="18.7" cy="4.5" r="1.25" fill="#c400c4"/><circle cx="18.7" cy="55.9" r="1.25" fill="#c400c4"/><circle cx="33.6" cy="4.5" r="1.25" fill="#c400c4"/><circle cx="33.6" cy="55.9" r="1.25" fill="#c400c4"/><circle cx="48.6" cy="4.5" r="1.25" fill="#c400c4"/><circle cx="48.6" cy="55.9" r="1.25" fill="#c400c4"/><circle cx="63.6" cy="4.5" r="1.25" fill="#c400c4"/><circle cx="63.6" cy="55.9" r="1.25" fill="#c400c4"/><circle cx="78.6" cy="4.5" r="1.25" fill="#c400c4"/><circle cx="78.6" cy="55.9" r="1.25" fill="#c400c4"/><circle cx="93.5" cy="4.5" r="1.25" fill="#c400c4"/><circle cx="93.5" cy="55.9" r="1.25" fill="#c400c4"/><circle cx="3.7" cy="14.8" r="1.25" fill="#c400c4"/><circle cx="93.5" cy="14.8" r="1.25" fill="#c400c4"/><circle cx="3.7" cy="25.1" r="1.25" fill="#c400c4"/><circle cx="93.5" cy="25.1" r="1.25" fill="#c400c4"/><circle cx="3.7" cy="35.3" r="1.25" fill="#c400c4"/><circle cx="93.5" cy="35.3" r="1.25" fill="#c400c4"/><circle cx="3.7" cy="45.6" r="1.25" fill="#c400c4"/><circle cx="93.5" cy="45.6" r="1.25" fill="#c400c4"/></svg>
  </div>
  <div class="btn" style="left:6.3px;top:220.3px;width:57.7px;height:34.3px;padding-top:7.5px">Áp dụng cho<br>các tầng khác</div>
  <div class="btn" style="left:6.3px;top:259.7px;width:57.7px;height:34px;padding-top:12px">Thiết kế lại</div>
  <div class="btn" style="left:7px;top:368.2px;width:57.7px;height:32.8px;padding-top:11.4px">Hoàn thành</div>
  <div class="btn" style="left:70px;top:368.2px;width:45px;height:32.8px;padding-top:11.4px">Hủy bỏ</div>
  <div class="btn" style="left:120.2px;top:368.2px;width:32.6px;height:32.8px">
    <svg width="18" height="18" viewBox="0 0 18 18" style="position:absolute;left:6.6px;top:6.3px">
      <defs><radialGradient id="qg" cx="0.45" cy="0.3" r="0.8"><stop offset="0" stop-color="#7cc4f8"/><stop offset="0.6" stop-color="#2c8be4"/><stop offset="1" stop-color="#1664c0"/></radialGradient></defs>
      <circle cx="9" cy="9" r="8" fill="url(#qg)" stroke="#5aa6e8" stroke-width="0.6"/>
      <text x="9" y="13.6" text-anchor="middle" font-family="Liberation Sans,Arial,sans-serif" font-weight="bold" font-size="13" fill="#fff">?</text>
    </svg>
  </div>
  <div id="grid">
    <div class="hd" style="left:0;width:27px"><span style="left:6px;top:8.7px">STT</span></div>
    <div class="hd" style="left:27px;width:45px"><span style="left:5px;top:8.7px">Story</span></div>
    <div class="hd" style="left:72px;width:45.7px"><span style="left:5px;top:3.5px;line-height:10.4px">Frame<br>max</span></div>
    <div class="hd" style="left:117.7px;width:60px"><span style="left:4.8px;top:8.7px">T2 (mm)</span></div>
    <div class="c sel" style="left:0px;top:23.70px;width:27px">1</div>
    <div class="c sel" style="left:27px;top:23.70px;width:45px">TANG_2</div>
    <div class="c sel" style="left:72px;top:23.70px;width:45.7px">C8</div>
    <div class="c sel" style="left:117.7px;top:23.70px;width:60px">800</div>
    <div class="c" style="left:0px;top:38.00px;width:27px">2</div>
    <div class="c" style="left:27px;top:38.00px;width:45px">TANG_3</div>
    <div class="c" style="left:72px;top:38.00px;width:45.7px">C22</div>
    <div class="c" style="left:117.7px;top:38.00px;width:60px">800</div>
    <div class="c" style="left:0px;top:52.30px;width:27px">3</div>
    <div class="c" style="left:27px;top:52.30px;width:45px">TANG_4</div>
    <div class="c" style="left:72px;top:52.30px;width:45.7px">C8</div>
    <div class="c" style="left:117.7px;top:52.30px;width:60px">500</div>
    <div class="c" style="left:0px;top:66.60px;width:27px">4</div>
    <div class="c" style="left:27px;top:66.60px;width:45px">TANG_5</div>
    <div class="c" style="left:72px;top:66.60px;width:45.7px">C22</div>
    <div class="c" style="left:117.7px;top:66.60px;width:60px">500</div>
    <div class="c" style="left:0px;top:80.90px;width:27px">5</div>
    <div class="c" style="left:27px;top:80.90px;width:45px">TANG_6</div>
    <div class="c" style="left:72px;top:80.90px;width:45.7px">C22</div>
    <div class="c" style="left:117.7px;top:80.90px;width:60px">500</div>
    <div class="c" style="left:0px;top:95.20px;width:27px">6</div>
    <div class="c" style="left:27px;top:95.20px;width:45px">TANG_7</div>
    <div class="c" style="left:72px;top:95.20px;width:45.7px">C22</div>
    <div class="c" style="left:117.7px;top:95.20px;width:60px">500</div>
    <div class="c" style="left:0px;top:109.50px;width:27px">7</div>
    <div class="c" style="left:27px;top:109.50px;width:45px">TANG_MAI</div>
    <div class="c" style="left:72px;top:109.50px;width:45.7px">C22</div>
    <div class="c" style="left:117.7px;top:109.50px;width:60px">500</div>
  </div>
</div>

</body>
</html>
